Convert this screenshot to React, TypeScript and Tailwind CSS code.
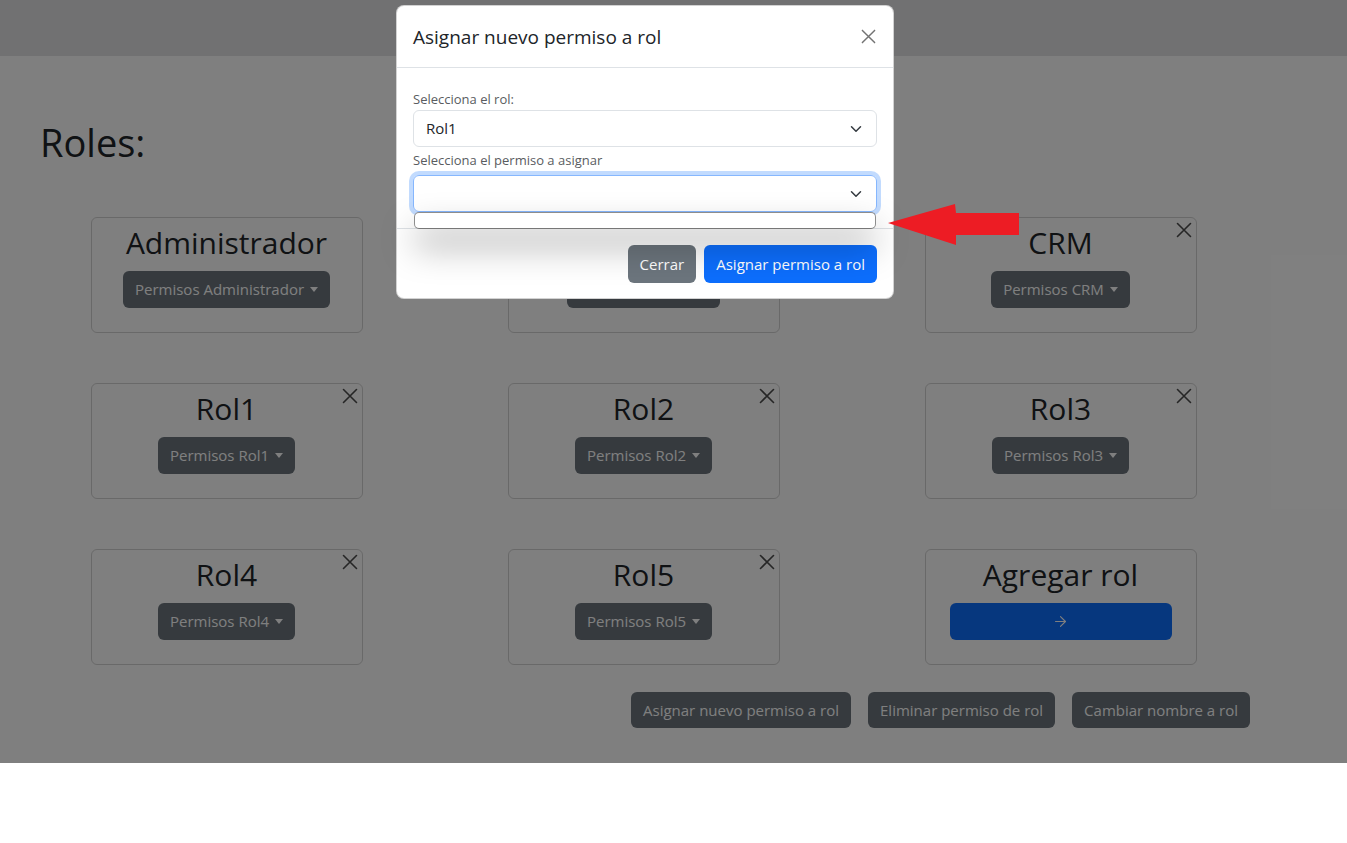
import { ArrowRight } from 'lucide-react'

interface Rol {
  nombre: string
  borrable: boolean
}

const roles: Rol[] = [
  { nombre: 'Administrador', borrable: false },
  { nombre: 'Ventas', borrable: true },
  { nombre: 'CRM', borrable: true },
  { nombre: 'Rol1', borrable: true },
  { nombre: 'Rol2', borrable: true },
  { nombre: 'Rol3', borrable: true },
  { nombre: 'Rol4', borrable: true },
  { nombre: 'Rol5', borrable: true },
]

function CloseIcon({ className }: { className?: string }) {
  return (
    <svg viewBox="0 0 16 16" className={className} fill="none" stroke="currentColor" strokeWidth="1.6" strokeLinecap="round">
      <path d="M1.5 1.5 14.5 14.5M14.5 1.5 1.5 14.5" />
    </svg>
  )
}

function Chevron() {
  return (
    <svg viewBox="0 0 16 16" className="h-[12px] w-[12px]" fill="none" stroke="#343a40" strokeWidth="2" strokeLinecap="round" strokeLinejoin="round">
      <path d="m2 5 6 6 6-6" />
    </svg>
  )
}

function RolCard({ rol }: { rol: Rol }) {
  return (
    <div className="relative mx-auto flex h-[116px] w-[272px] flex-col items-center rounded-[6px] border border-black/[.175] pt-[6px]">
      {rol.borrable && (
        <button className="absolute right-[4px] top-[4px] p-0 text-black/70">
          <CloseIcon className="h-[16px] w-[16px]" />
        </button>
      )}
      <h2 className="text-[30px] font-medium leading-[38px] text-[#212529]">{rol.nombre}</h2>
      <button className="mt-[9px] flex h-[37px] items-center rounded-[6px] bg-[#6c757d] px-3 text-[15px] text-white">
        Permisos {rol.nombre}
        <span className="ml-[6px] inline-block h-0 w-0 border-x-[4.5px] border-t-[5px] border-x-transparent border-t-white" />
      </button>
    </div>
  )
}

function AgregarCard() {
  return (
    <div className="mx-auto flex h-[116px] w-[272px] flex-col items-center rounded-[6px] border border-black/[.175] pt-[6px]">
      <h2 className="text-[30px] font-medium leading-[38px] text-[#212529]">Agregar rol</h2>
      <button className="mt-[9px] flex h-[37px] w-[222px] items-center justify-center rounded-[6px] bg-[#0d6efd] text-white">
        <ArrowRight size={17} strokeWidth={1.6} />
      </button>
    </div>
  )
}

export default function App() {
  return (
    <div className="font-['Open_Sans',sans-serif] text-[#212529]">
      <div className="relative h-[763px] overflow-hidden bg-white">
        <nav className="h-14 bg-[#e2e3e5]" />

        <h1 className="ml-[40px] mt-[63px] text-[38px] font-medium leading-[46px]">Roles:</h1>

        <div className="mt-[52px] grid grid-cols-[repeat(3,417px)] gap-y-[50px] pl-[18px]">
          {roles.map(r => <RolCard key={r.nombre} rol={r} />)}
          <AgregarCard />
        </div>

        <div className="mt-[27px] flex justify-end gap-[17px] pr-[97px]">
          <button className="h-[36px] rounded-[6px] bg-[#6c757d] px-3 text-[15px] text-white">Asignar nuevo permiso a rol</button>
          <button className="h-[36px] rounded-[6px] bg-[#6c757d] px-3 text-[15px] text-white">Eliminar permiso de rol</button>
          <button className="h-[36px] rounded-[6px] bg-[#6c757d] px-3 text-[15px] text-white">Cambiar nombre a rol</button>
        </div>

        {/* backdrop */}
        <div className="absolute inset-0 z-10 bg-black/50" />

        {/* modal */}
        <div className="absolute left-[396px] top-[5px] z-20 w-[498px] rounded-[8px] border border-black/[.175] bg-white">
          <div className="flex h-[62px] items-center justify-between border-b border-[#dee2e6] px-4">
            <h5 className="text-[19px] font-medium leading-[28px]">Asignar nuevo permiso a rol</h5>
            <button className="mr-[1px] text-black/55">
              <CloseIcon className="h-[15px] w-[15px]" />
            </button>
          </div>

          <div className="px-4 pb-4 pt-[21px]">
            <label className="block text-[13px] leading-[21px] text-[#595c5f]">Selecciona el rol:</label>
            <div className="flex h-[37px] items-center justify-between rounded-[6px] border border-[#dee2e6] pl-3 pr-[14px] text-[15px]">
              <span>Rol1</span>
              <Chevron />
            </div>
            <label className="mb-[4px] mt-[3px] block text-[13px] leading-[21px] text-[#595c5f]">Selecciona el permiso a asignar</label>
            <div className="relative">
              <div className="flex h-[37px] items-center justify-end rounded-[6px] border border-[#86b7fe] pr-[14px] shadow-[0_0_0_4px_rgba(13,110,253,0.25)]">
                <Chevron />
              </div>
              {/* open native dropdown list, still empty */}
              <div className="absolute left-[1px] right-[1px] top-full z-10 h-[17px] rounded-[5px] border border-[#8d8d8d] border-b-[#777] bg-white shadow-[0_18px_34px_rgba(0,0,0,0.34)]" />
            </div>
          </div>

          <div className="flex justify-end gap-2 border-t border-[#dee2e6] px-4 pb-[15px] pt-4">
            <button className="h-[38px] rounded-[6px] bg-[#6c757d] px-3 text-[15px] text-white">Cerrar</button>
            <button className="h-[38px] rounded-[6px] bg-[#0d6efd] px-3 text-[15px] text-white">Asignar permiso a rol</button>
          </div>
        </div>

        {/* red arrow pointing at the empty list */}
        <svg className="absolute left-[885px] top-[200px] z-30" width="140" height="50" viewBox="0 0 140 50">
          <polygon points="3,23 70,4 71,13 134,13 134,35 71,35 71,45" fill="#ed1c24" />
        </svg>
      </div>
    </div>
  )
}
